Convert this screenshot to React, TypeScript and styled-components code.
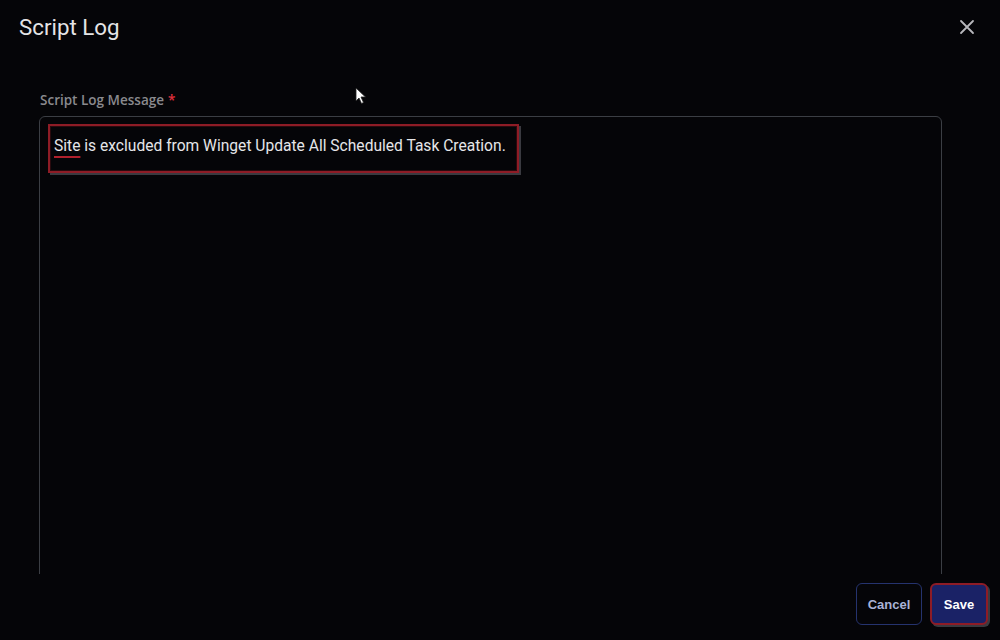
import React from "react";
import styled, { createGlobalStyle } from "styled-components";

const Global = createGlobalStyle`
  html, body { margin: 0; padding: 0; background: #050508; }
  body { width: 1000px; height: 640px; overflow: hidden; font-family: Roboto, "Liberation Sans", sans-serif; }
  * { box-sizing: border-box; }
`;

const Dialog = styled.div`
  position: relative;
  width: 1000px;
  height: 640px;
  background: #050508;
  display: flex;
  flex-direction: column;
`;

const Header = styled.div`
  height: 56px;
  display: flex;
  align-items: center;
  justify-content: space-between;
  padding: 0 25px 2px 19px;
`;

const Title = styled.h1`
  margin: 0;
  font-family: Roboto, "Liberation Sans", sans-serif;
  font-weight: 400;
  font-size: 22.3px;
  color: #e4e4e6;
`;

const CloseBtn = styled.button`
  background: none;
  border: 0;
  padding: 0;
  width: 16px;
  height: 16px;
  display: flex;
  color: #b8b8bc;
`;

const Body = styled.div`
  height: 518px;
  overflow: hidden;
  padding: 35px 58px 0 39px;
  display: flex;
  flex-direction: column;
`;

const Label = styled.label`
  font-family: "Open Sans", sans-serif;
  font-weight: 600;
  font-size: 13.5px;
  color: #8a8a8e;
  margin-left: 1px;
  line-height: 19px;
  margin-bottom: 6px;
`;

const Star = styled.span`
  color: #e0303c;
  margin-left: 4px;
`;

const Field = styled.div`
  height: 560px;
  border: 1px solid #3b3e44;
  border-radius: 6px;
  padding: 7px 8px;
  flex-shrink: 0;
`;

const Highlight = styled.div`
  display: inline-block;
  border: 2px solid #8e1c26;
  box-shadow: 2px 2px 0 #3a3a40, inset 0 0 0 1px #2a0a0e;
  padding: 10px 9px 12px 4px;
  width: 471px;
  height: 49px;
`;

const Message = styled.span`
  font-family: Roboto, "Liberation Sans", sans-serif;
  font-size: 15.6px;
  color: #e6e6e8;
  white-space: nowrap;
`;

const Misspelled = styled.span`
  text-decoration: underline;
  text-decoration-color: #b0202c;
  text-decoration-thickness: 2px;
  text-underline-offset: 5px;
`;

const Footer = styled.div`
  flex: 1;
  display: flex;
  justify-content: flex-end;
  align-items: flex-start;
  gap: 8px;
  padding: 9px 12px 0 0;
`;

const Button = styled.button<{ $primary?: boolean }>`
  height: 42px;
  padding: 0;
  border-radius: 6px;
  font-family: "Liberation Sans", Arial, sans-serif;
  font-weight: 700;
  font-size: 13px;
  border: ${(p) => (p.$primary ? "2px solid #8e1c26" : "1px solid #25336e")};
  background: ${(p) => (p.$primary ? "#1a2266" : "transparent")};
  color: ${(p) => (p.$primary ? "#ffffff" : "#a9b3d6")};
  box-shadow: ${(p) => (p.$primary ? "2px 2px 0 #3a3a40" : "none")};
  width: ${(p) => (p.$primary ? "58px" : "66px")};
`;

const Cursor = styled.svg`
  position: absolute;
  left: 355px;
  top: 87px;
`;

export default function App() {
  return (
    <>
      <Global />
      <Dialog>
        <Header>
          <Title>Script Log</Title>
          <CloseBtn aria-label="close">
            <svg width="16" height="16" viewBox="0 0 16 16">
              <path d="M2 2 L14 14 M14 2 L2 14" stroke="currentColor" strokeWidth="1.8" strokeLinecap="round" />
            </svg>
          </CloseBtn>
        </Header>
        <Body>
          <Label>
            Script Log Message<Star>*</Star>
          </Label>
          <Field>
            <Highlight>
              <Message>
                <Misspelled>Site</Misspelled> is excluded from Winget Update All Scheduled Task Creation.
              </Message>
            </Highlight>
          </Field>
        </Body>
        <Footer>
          <Button>Cancel</Button>
          <Button $primary>Save</Button>
        </Footer>
        <Cursor width="12" height="18" viewBox="0 0 12 18">
          <path d="M1 1 L1 14 L4 11 L6.5 16.5 L8.5 15.5 L6 10 L10.5 10 Z" fill="#ffffff" stroke="#222" strokeWidth="0.8" />
        </Cursor>
      </Dialog>
    </>
  );
}
